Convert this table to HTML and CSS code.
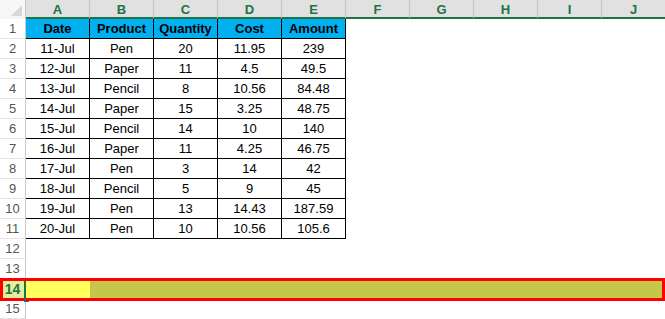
FILE: index.html
```html
<!DOCTYPE html>
<html>
<head>
<meta charset="utf-8">
<link rel="stylesheet" href="styles.css">
</head>
<body>
<div class="sheet">
  <div class="row colhead">
    <div class="corner"><span class="tri"></span></div>
    <div class="ch">A</div><div class="ch">B</div><div class="ch">C</div><div class="ch">D</div><div class="ch">E</div>
    <div class="ch">F</div><div class="ch">G</div><div class="ch">H</div><div class="ch">I</div><div class="ch">J</div>
  </div>
  <div class="row"><div class="rh">1</div><div class="c th">Date</div><div class="c th">Product</div><div class="c th">Quantity</div><div class="c th">Cost</div><div class="c th">Amount</div></div>
  <div class="row"><div class="rh">2</div><div class="c">11-Jul</div><div class="c">Pen</div><div class="c">20</div><div class="c">11.95</div><div class="c">239</div></div>
  <div class="row"><div class="rh">3</div><div class="c">12-Jul</div><div class="c">Paper</div><div class="c">11</div><div class="c">4.5</div><div class="c">49.5</div></div>
  <div class="row"><div class="rh">4</div><div class="c">13-Jul</div><div class="c">Pencil</div><div class="c">8</div><div class="c">10.56</div><div class="c">84.48</div></div>
  <div class="row"><div class="rh">5</div><div class="c">14-Jul</div><div class="c">Paper</div><div class="c">15</div><div class="c">3.25</div><div class="c">48.75</div></div>
  <div class="row"><div class="rh">6</div><div class="c">15-Jul</div><div class="c">Pencil</div><div class="c">14</div><div class="c">10</div><div class="c">140</div></div>
  <div class="row"><div class="rh">7</div><div class="c">16-Jul</div><div class="c">Paper</div><div class="c">11</div><div class="c">4.25</div><div class="c">46.75</div></div>
  <div class="row"><div class="rh">8</div><div class="c">17-Jul</div><div class="c">Pen</div><div class="c">3</div><div class="c">14</div><div class="c">42</div></div>
  <div class="row"><div class="rh">9</div><div class="c">18-Jul</div><div class="c">Pencil</div><div class="c">5</div><div class="c">9</div><div class="c">45</div></div>
  <div class="row"><div class="rh">10</div><div class="c">19-Jul</div><div class="c">Pen</div><div class="c">13</div><div class="c">14.43</div><div class="c">187.59</div></div>
  <div class="row"><div class="rh">11</div><div class="c">20-Jul</div><div class="c">Pen</div><div class="c">10</div><div class="c">10.56</div><div class="c">105.6</div></div>
  <div class="row"><div class="rh">12</div></div>
  <div class="row"><div class="rh">13</div></div>
  <div class="row sel"><div class="rh rh-sel">14</div><div class="yel"></div><div class="olive"></div></div>
  <div class="row"><div class="rh">15</div></div>
  <div class="selbox"></div>
  <div class="cursor"></div>
</div>
</body>
</html>
```
FILE: styles.css
```css
* { box-sizing: border-box; }
html, body { margin: 0; padding: 0; background: #fff; }
body { width: 665px; height: 319px; overflow: hidden; }
.sheet {
  position: relative;
  width: 665px;
  height: 319px;
  overflow: hidden;
  font-family: "Liberation Sans", Arial, sans-serif;
  font-size: 13px;
  color: #000;
}
.row {
  display: grid;
  grid-template-columns: 26px repeat(10, 64px);
  height: 20px;
}
.colhead { height: 19px; }
.corner {
  background: #f7f7f7;
  border-right: 1px solid #c8c8c8;
  display: flex;
  align-items: flex-end;
  justify-content: flex-end;
  padding: 0 3px 3px 0;
}
.tri {
  width: 0;
  height: 0;
  border-left: 11px solid transparent;
  border-bottom: 11px solid #d8d8d8;
}
.ch {
  background: #e1e1e1;
  border-right: 1px solid #c4c4c4;
  border-bottom: 2px solid #217346;
  color: #217346;
  font-weight: bold;
  display: flex;
  align-items: center;
  justify-content: center;
  padding-top: 1px;
}
.rh {
  border-right: 1px solid #c8c8c8;
  border-bottom: 1px solid #e4e4e4;
  color: #555;
  display: flex;
  align-items: center;
  justify-content: center;
}
.c {
  border-right: 1px solid #000;
  border-bottom: 1px solid #000;
  display: flex;
  align-items: center;
  justify-content: center;
}
.th {
  background: #00b0f0;
  font-weight: bold;
}
.rh-sel {
  background: #e2ef9c;
  color: #217346;
  font-weight: bold;
  font-size: 14px;
}
.yel { background: #ffff5e; }
.olive { background: #c5c74b; grid-column: span 9; }
.selbox {
  position: absolute;
  left: 0;
  top: 278px;
  width: 665px;
  height: 23px;
  border: 3px solid #ff0000;
}
.cursor {
  position: absolute;
  left: 24px;
  top: 281px;
  width: 2px;
  height: 21px;
  background: #217346;
}
.cursor::after {
  content: "";
  position: absolute;
  left: 2px;
  bottom: 0;
  width: 3px;
  height: 1px;
  background: #217346;
}
```
